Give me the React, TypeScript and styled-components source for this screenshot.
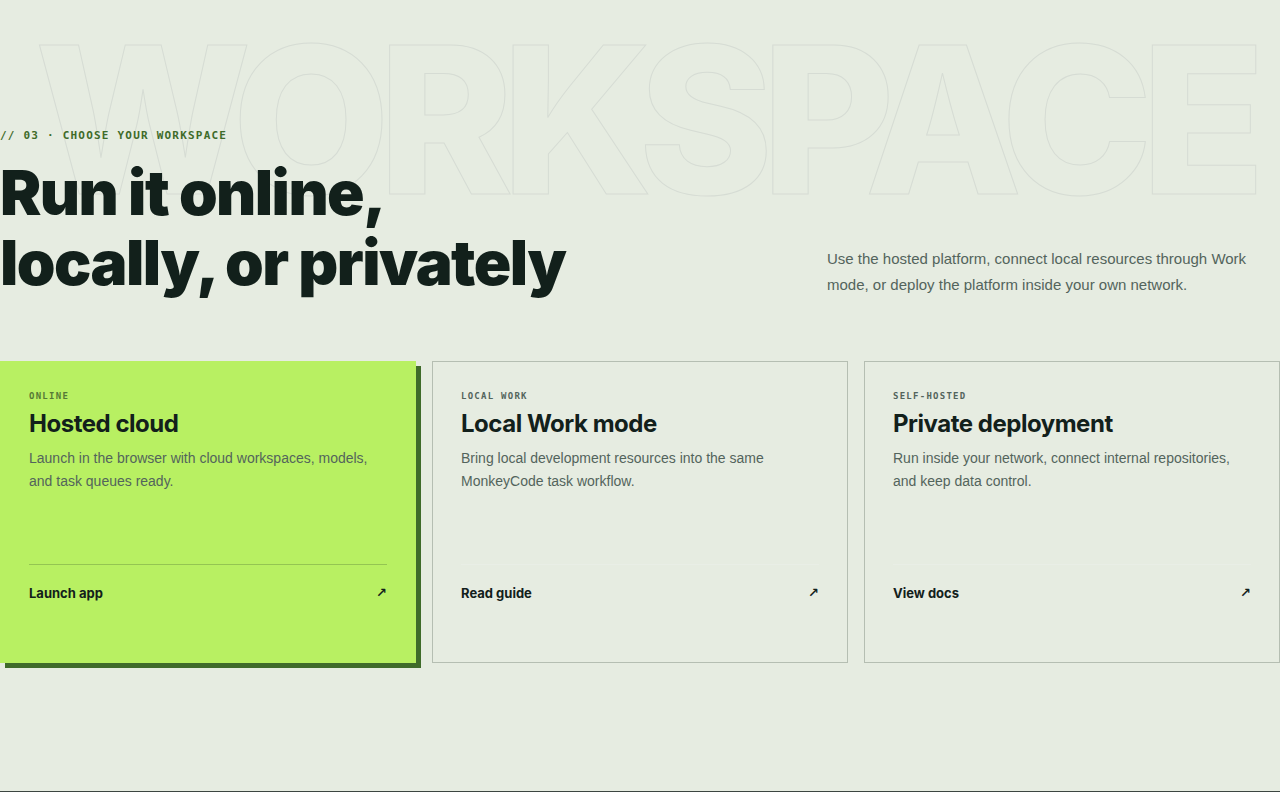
import React from "react";
import styled, { createGlobalStyle } from "styled-components";

const sans = `"Liberation Sans", Arial, sans-serif`;
const display = `Inter, "Liberation Sans", sans-serif`;
const mono = `"DejaVu Sans Mono", "Liberation Mono", monospace`;

const GlobalStyle = createGlobalStyle`
  *, *::before, *::after { box-sizing: border-box; }
  body {
    margin: 0;
    background: #e6ece1;
    color: #12201b;
    font-family: ${sans};
  }
  h2, h3, p { margin: 0; }
`;

const Section = styled.section`
  position: relative;
  min-height: 100vh;
  padding: 129px 0 128px;
  overflow: hidden;
  border-bottom: 1px solid #3c4641;
`;

const Watermark = styled.div`
  position: absolute;
  top: 0;
  left: 0;
  right: 0;
  padding-left: 8px;
  text-align: center;
  font-family: ${display};
  font-size: 16vw;
  font-weight: 800;
  line-height: 240px;
  letter-spacing: -0.06em;
  white-space: nowrap;
  color: transparent;
  -webkit-text-stroke: 1px #d6dcd4;
  pointer-events: none;
  user-select: none;
`;

const Header = styled.header`
  position: relative;
  display: flex;
  align-items: flex-end;
  justify-content: space-between;
  gap: 48px;
`;

const Eyebrow = styled.p`
  font-family: ${mono};
  font-size: 11px;
  font-weight: 700;
  line-height: 14px;
  letter-spacing: 0.11em;
  text-transform: uppercase;
  color: #3f6b2a;
`;

const Title = styled.h2`
  margin-top: 15px;
  font-family: ${display};
  font-size: 62px;
  font-weight: 900;
  line-height: 70px;
  letter-spacing: -0.025em;
`;

const Intro = styled.p`
  flex: 0 1 453px;
  font-size: 15px;
  line-height: 26px;
  color: #53645c;
`;

const Cards = styled.div`
  position: relative;
  display: grid;
  grid-template-columns: repeat(3, 1fr);
  gap: 16px;
  margin-top: 63px;
`;

const Card = styled.article<{ $featured?: boolean }>`
  display: flex;
  flex-direction: column;
  min-height: 302px;
  padding: 28px;
  border: 1px solid ${(p) => (p.$featured ? "#b8f062" : "#b5beb2")};
  background: ${(p) => (p.$featured ? "#b8f062" : "transparent")};
  box-shadow: ${(p) => (p.$featured ? "5px 5px 0 #3f6b2a" : "none")};
`;

const Label = styled.p<{ $featured?: boolean }>`
  font-family: ${mono};
  font-size: 9px;
  font-weight: 700;
  line-height: 12px;
  letter-spacing: 0.14em;
  text-transform: uppercase;
  color: ${(p) => (p.$featured ? "#567a36" : "#53645c")};
`;

const CardTitle = styled.h3`
  margin-top: 6px;
  font-family: ${display};
  font-size: 24px;
  font-weight: 700;
  line-height: 32px;
  letter-spacing: -0.02em;
`;

const CardText = styled.p`
  margin-top: 7px;
  font-size: 14px;
  line-height: 23px;
  color: #53645c;
`;

const CardLink = styled.a<{ $featured?: boolean }>`
  display: flex;
  align-items: center;
  justify-content: space-between;
  margin: 71px 0 32px;
  padding-top: 19px;
  border-top: 1px solid ${(p) => (p.$featured ? "#94c552" : "#e9eee6")};
  font-family: ${display};
  font-size: 13px;
  font-weight: 700;
  line-height: 18px;
  color: inherit;
  text-decoration: none;
`;

const Arrow = styled.span`
  font-family: "DejaVu Sans", sans-serif;
`;

const cards = [
  {
    label: "Online",
    title: "Hosted cloud",
    text: "Launch in the browser with cloud workspaces, models, and task queues ready.",
    action: "Launch app",
    featured: true,
  },
  {
    label: "Local work",
    title: "Local Work mode",
    text: "Bring local development resources into the same MonkeyCode task workflow.",
    action: "Read guide",
  },
  {
    label: "Self-hosted",
    title: "Private deployment",
    text: "Run inside your network, connect internal repositories, and keep data control.",
    action: "View docs",
  },
];

export default function App() {
  return (
    <>
      <GlobalStyle />
      <Section>
        <Watermark aria-hidden="true">WORKSPACE</Watermark>
        <Header>
          <div>
            <Eyebrow>// 03 · Choose your workspace</Eyebrow>
            <Title>
              Run it online,
              <br />
              locally, or privately
            </Title>
          </div>
          <Intro>
            Use the hosted platform, connect local resources through Work mode, or deploy the
            platform inside your own network.
          </Intro>
        </Header>
        <Cards>
          {cards.map((card) => (
            <Card key={card.title} $featured={card.featured}>
              <Label $featured={card.featured}>{card.label}</Label>
              <CardTitle>{card.title}</CardTitle>
              <CardText>{card.text}</CardText>
              <CardLink href="#" $featured={card.featured}>
                <span>{card.action}</span>
                <Arrow aria-hidden="true">↗</Arrow>
              </CardLink>
            </Card>
          ))}
        </Cards>
      </Section>
    </>
  );
}
